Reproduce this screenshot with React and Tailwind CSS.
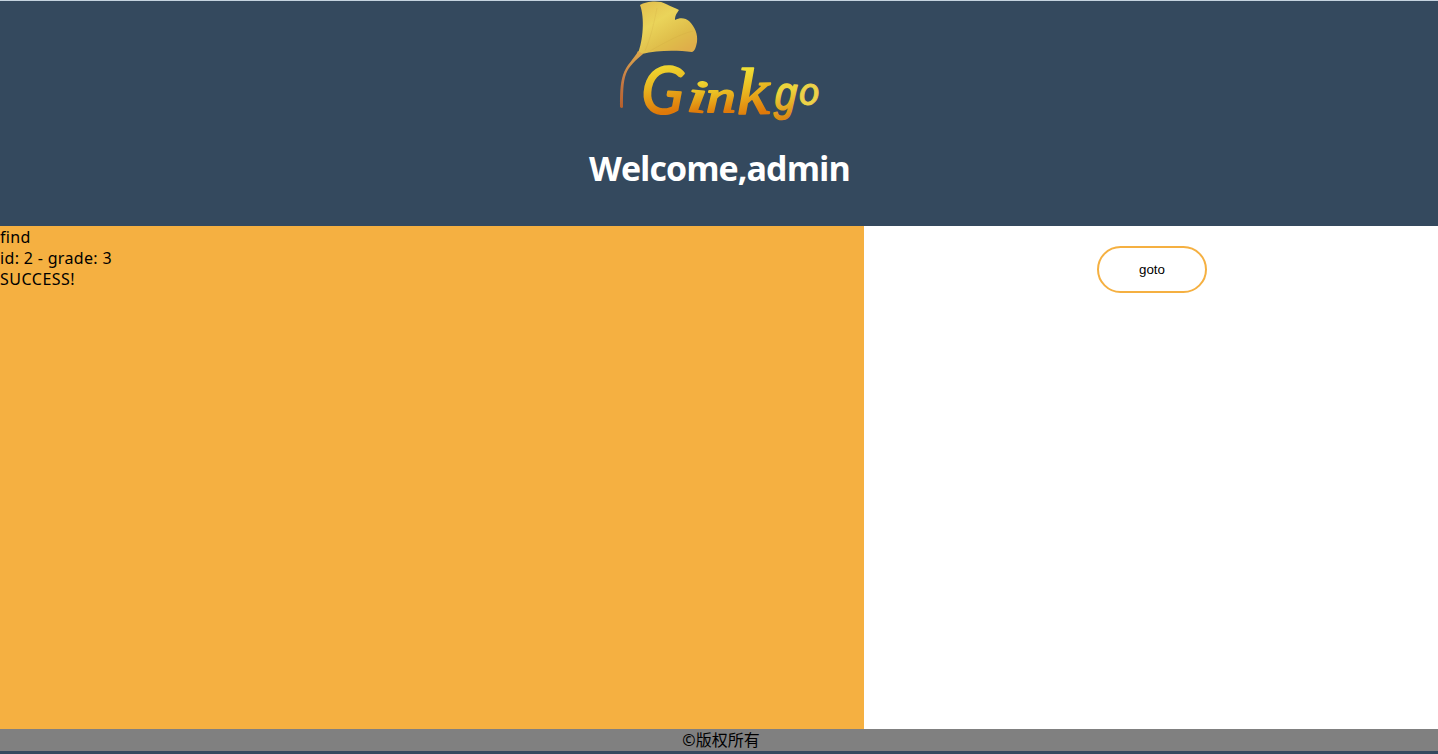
const letters = [
  { ch: "G", x: 20, y: 111, size: 66, sx: 0.95, rotate: 4, font: "font-['Lato',sans-serif]", ink: "url(#letter)", stroke: 1.8 },
  { ch: "i", x: 66, y: 110, size: 46, sx: 1.6, rotate: 5, font: "font-['Liberation_Serif',serif]", ink: "url(#letter)", stroke: 1.8 },
  { ch: "n", x: 86, y: 111, size: 46, sx: 1.3, rotate: 0, font: "font-['Liberation_Serif',serif]", ink: "url(#letter)", stroke: 1.8 },
  { ch: "k", x: 117, y: 113, size: 66, sx: 1.12, rotate: -1, font: "font-['Liberation_Serif',serif]", ink: "url(#letter)", stroke: 1.6 },
  { ch: "g", x: 154, y: 108, size: 48, sx: 0.82, rotate: 4, font: "font-['Liberation_Sans',sans-serif]", ink: "url(#tail)", stroke: 1.6 },
  { ch: "o", x: 179, y: 104, size: 40, sx: 1, rotate: 0, font: "font-['Lato',sans-serif]", ink: "#ecd248", stroke: 0.9 },
];

function Logo() {
  return (
    <svg className="block h-[121px] w-[200px] shrink-0 overflow-visible" viewBox="0 0 200 121" role="img" aria-label="Ginkgo">
      <defs>
        <linearGradient id="leaf" x1="0" y1="0" x2="0.7" y2="1">
          <stop offset="0" stopColor="#e3bd4d" />
          <stop offset="0.4" stopColor="#ead45a" />
          <stop offset="0.75" stopColor="#dfbd4a" />
          <stop offset="1" stopColor="#dfae4a" />
        </linearGradient>
        <linearGradient id="stem" x1="0" y1="0" x2="0" y2="1">
          <stop offset="0" stopColor="#dfa94b" />
          <stop offset="0.5" stopColor="#c67b45" />
          <stop offset="1" stopColor="#b65f2b" />
        </linearGradient>
        <linearGradient id="letter" x1="0.1" y1="0.1" x2="0.2" y2="0.85">
          <stop offset="0.15" stopColor="#f0df35" />
          <stop offset="0.55" stopColor="#e8b51f" />
          <stop offset="1" stopColor="#df7909" />
        </linearGradient>
        <linearGradient id="tail" x1="0.1" y1="0.2" x2="0.2" y2="1">
          <stop offset="0.4" stopColor="#ecd43c" />
          <stop offset="1" stopColor="#dd8a12" />
        </linearGradient>
      </defs>
      <path
        d="M20 4C26 0 40 -1 46 3C52 6 56 7 59 9C57 12 55 14 55 19C60 16 66 17 69 20C75 26 78 33 77 41C76 46 75 50 72 51C57 49 37 49 22 53C21 54 19 54 18 52C23 40 25 17 20 4Z"
        fill="url(#leaf)"
      />
      <path d="M25 50C31 36 34 22 37 7M30 50C44 42 60 33 73 30" fill="none" stroke="#c99b3b" strokeOpacity="0.18" />
      <path
        d="M18 50C15 57 6 64 3 74C0 83 0 95 0 106Q2 108 3 106C3 93 3 81 6 73C9 65 16 59 23 53Z"
        fill="url(#stem)"
      />
      {letters.map((l) => (
        <text
          key={l.x}
          transform={`translate(${l.x} ${l.y}) rotate(${l.rotate}) scale(${l.sx} 1)`}
          className={`italic ${l.font}`}
          fontSize={l.size}
          fill={l.ink}
          stroke={l.ink}
          strokeWidth={l.stroke}
          strokeLinejoin="round"
        >
          {l.ch}
        </text>
      ))}
    </svg>
  );
}

export default function App() {
  return (
    <div className="flex h-[754px] w-full flex-col overflow-hidden bg-[#34495e] font-['Noto_Sans','Noto_Sans_CJK_SC',sans-serif] text-black">
      <header className="flex h-[226px] shrink-0 flex-col items-center border-t border-[#c5d3df]">
        <div className="pl-0.5">
          <Logo />
        </div>
        <h1 className="mt-[22px] pl-px font-['Open_Sans',sans-serif] text-[34px] leading-[48px] font-bold tracking-[-0.95px] text-white">
          Welcome,admin
        </h1>
      </header>
      <main className="flex h-[503px] shrink-0 bg-white">
        <section className="w-[864px] bg-[#f5b041] pt-px text-base leading-[21px] tracking-[0.33px]">
          <p>find</p>
          <p>id: 2 - grade: 3</p>
          <p className="tracking-[0.5px]">SUCCESS!</p>
        </section>
        <section className="flex flex-1 items-start justify-center pt-5">
          <button className="ml-0.5 h-[47px] w-[110px] rounded-full border-2 border-[#f5b041] bg-white font-['Liberation_Sans',sans-serif] text-[13.33px] text-black">
            goto
          </button>
        </section>
      </main>
      <footer className="h-[22px] shrink-0 bg-[#808080] pl-1 text-center text-base leading-[22px]">
        ©版权所有
      </footer>
    </div>
  );
}
